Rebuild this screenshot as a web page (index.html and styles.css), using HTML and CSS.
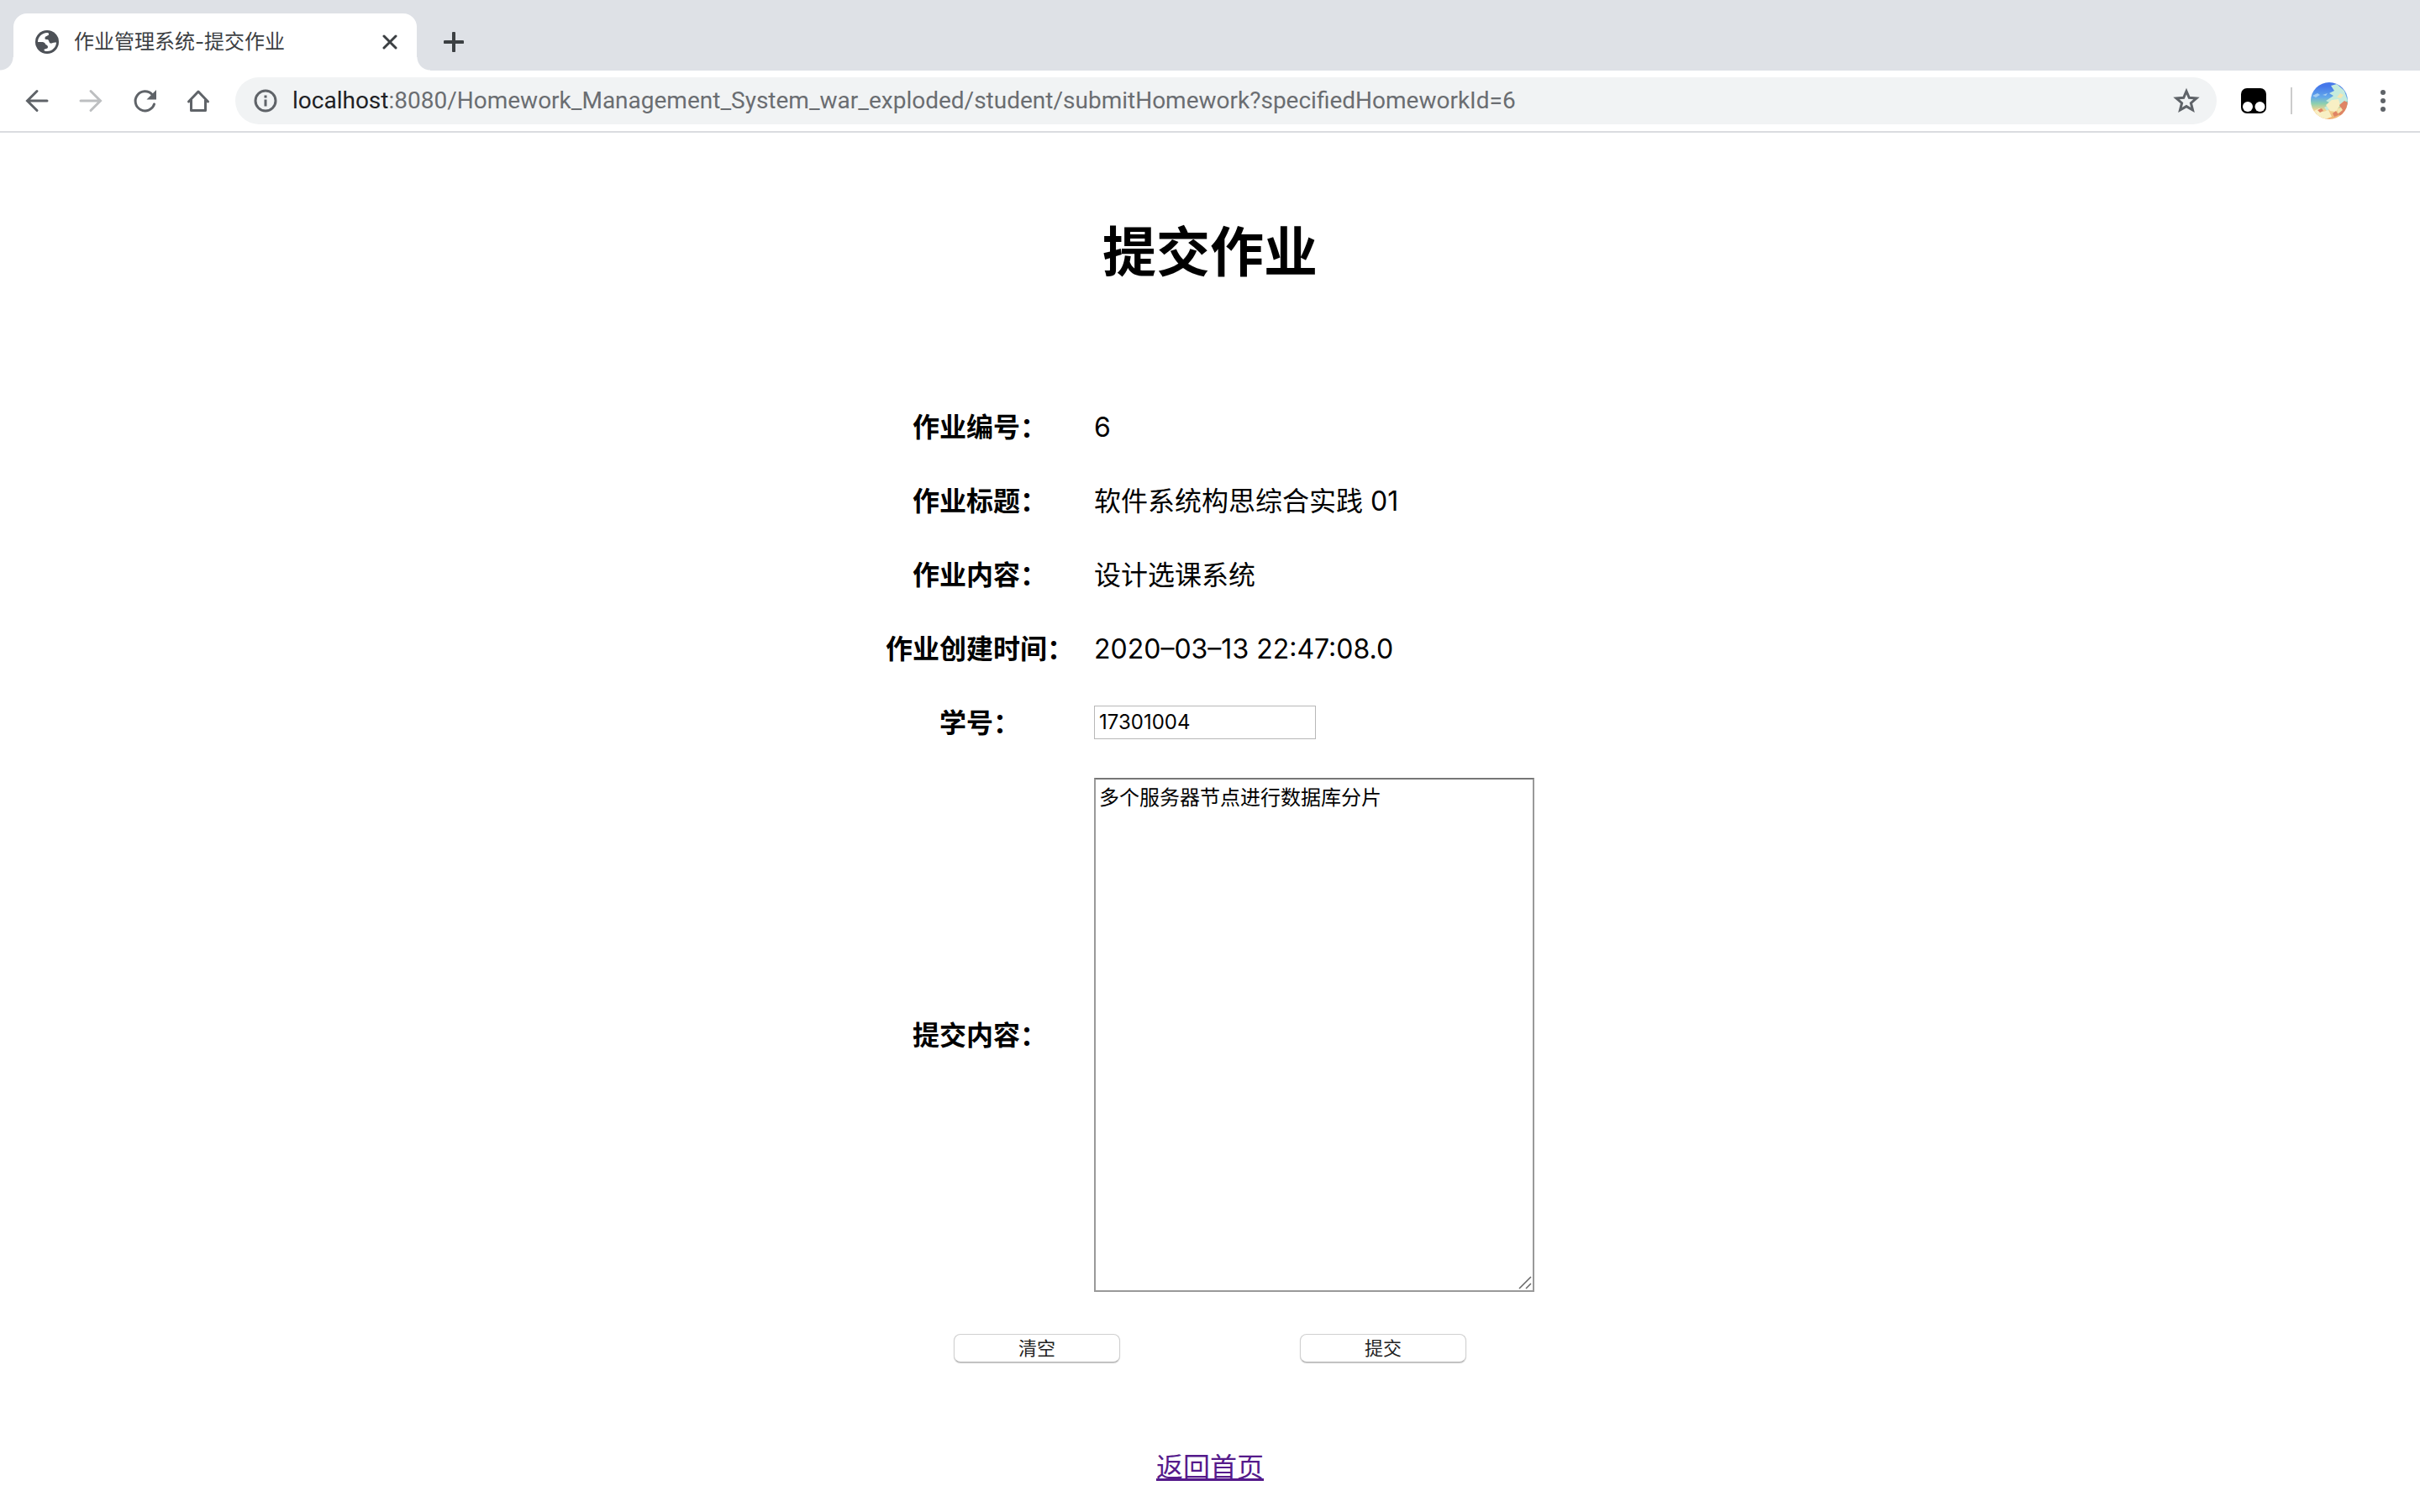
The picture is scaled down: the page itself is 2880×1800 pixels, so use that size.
FILE: index.html
```html
<!DOCTYPE html>
<html lang="zh-CN">
<head>
<meta charset="utf-8">
<title>作业管理系统-提交作业</title>
<link rel="stylesheet" href="styles.css">
</head>
<body>
<header class="browser">
  <div class="tab-strip">
    <div class="tab">
      <svg class="favicon" viewBox="0 0 28 28" aria-hidden="true"><circle cx="14" cy="14" r="14" fill="#4d5157"/><path d="M3 14C3 8 8 3 14 3C16.500 3 16.500 5 15.500 6C14 7 11.500 7 11.500 9.500C11 11 12.500 11 14.500 11C16.500 11 16 15 18 15.500C20 16 21 14 25 14.500C25 20 20 25 14 25C11.500 25 10 24.500 10.500 23C11 22 15 22.500 15 20C15 17 12 18 11.500 15.500C11 14 7 14 3 14Z" fill="#fff"/></svg>
      <span class="tab-title">作业管理系统-提交作业</span>
      <button class="icon-button tab-close" type="button" aria-label="关闭标签页"><svg viewBox="0 0 18 18"><path d="M2 2l14 14M16 2L2 16" fill="none" stroke="#3c4043" stroke-width="3" stroke-linecap="round"/></svg></button>
    </div>
    <button class="icon-button new-tab" type="button" aria-label="新标签页"><svg viewBox="0 0 24 24"><path d="M12 1.500v21M1.500 12h21" fill="none" stroke="#3c4043" stroke-width="4" stroke-linecap="round"/></svg></button>
  </div>
  <div class="toolbar">
    <nav class="nav-buttons">
      <button class="icon-button" type="button" aria-label="后退"><svg viewBox="0 0 32 32"><path d="M28 16H5M16 4.500L4.500 16L16 27.500" fill="none" stroke="#5f6368" stroke-width="3" stroke-linecap="round"/></svg></button>
      <button class="icon-button" type="button" aria-label="前进"><svg viewBox="0 0 32 32"><path d="M4 16h23M16 4.500L27.500 16L16 27.500" fill="none" stroke="#bdbfc1" stroke-width="3" stroke-linecap="round"/></svg></button>
      <button class="icon-button" type="button" aria-label="重新加载"><svg viewBox="0 0 32 32"><path d="M27.500 20A11.500 11.500 0 1 1 25 8.500" fill="none" stroke="#5f6368" stroke-width="3" stroke-linecap="round"/><path d="M30 3v11.500H18.500z" fill="#5f6368"/></svg></button>
      <button class="icon-button" type="button" aria-label="主页"><svg viewBox="0 0 32 32"><path d="M4.500 17L16 5L27.500 17M7.500 15V27.500H24.500V15" fill="none" stroke="#5f6368" stroke-width="3" stroke-linecap="round" stroke-linejoin="round"/></svg></button>
    </nav>
    <div class="omnibox">
      <svg class="info" viewBox="0 0 28 28" aria-hidden="true"><circle cx="14" cy="14" r="12" fill="none" stroke="#5f6368" stroke-width="3"/><path d="M12.500 12.500h3v8h-3zM12.500 7.500h3v3h-3z" fill="#5f6368"/></svg>
      <span class="url"><span class="host">localhost</span>:8080/Homework_Management_System_war_exploded/student/submitHomework?specifiedHomeworkId=6</span>
      <button class="icon-button" type="button" aria-label="添加书签"><svg viewBox="0 0 32 32"><path d="M16 4.500L19.300 12.300L28 13L21.400 18.700L23.500 27L16 22.600L8.500 27L10.600 18.700L4 13L12.700 12.300Z" fill="none" stroke="#5f6368" stroke-width="3"/></svg></button>
    </div>
    <div class="tools">
      <button class="icon-button" type="button" aria-label="扩展程序"><svg viewBox="0 0 32 32"><rect x="1" y="1" width="30" height="30" rx="7"/><circle cx="9" cy="23" r="6" fill="#fff"/><circle cx="23.500" cy="23" r="6" fill="#fff"/></svg></button>
      <span class="divider"></span>
      <button class="icon-button avatar" type="button" aria-label="用户"><svg viewBox="0 0 44 44">
        <defs><linearGradient id="sky" x2="0" y2="1"><stop offset="0.100" stop-color="#4577ea"/><stop offset="0.400" stop-color="#62a8ea"/><stop offset="0.580" stop-color="#8ed0ae"/><stop offset="0.750" stop-color="#f2d391"/><stop offset="1" stop-color="#f0b070"/></linearGradient></defs>
        <rect width="44" height="44" fill="url(#sky)"/>
        <path d="M24 4l7-2 9 8 4 12-8 4-9 3-8 5-3-4 8-5-6-3 9-6-5-3 6-3z" fill="#c5ebdc"/>
        <path d="M2 16l6-3 3 2-5 3zM14 15l6-2-2 3z" fill="#a5cdf0"/>
        <path d="M18 27l7-6 8-1 2 7-5 8-7-1zM4 34l6-3 5 4 6-2 4 8-8 3-8-4z" fill="#f8efc4"/>
        <path d="M34 27l6-5 4 2v10l-7 6-5-2 5-6zM8 33l5-2 2 3-4 2zM26 37l4-3 3 5-5 2z" fill="#df8565"/>
        <path d="M31 32l5-2 2 3-5 4zM35 13l4 2-3 4-5-1z" fill="#f5e6b0"/>
      </svg></button>
      <button class="icon-button" type="button" aria-label="菜单"><svg viewBox="0 0 32 32"><g fill="#5f6368"><circle cx="16" cy="6" r="3"/><circle cx="16" cy="16" r="3"/><circle cx="16" cy="26" r="3"/></g></svg></button>
    </div>
  </div>
</header>
<main class="page">
  <h1>提交作业</h1>
  <form class="homework-form">
    <table class="fields">
      <tr><th scope="row">作业编号：</th><td>6</td></tr>
      <tr><th scope="row">作业标题：</th><td>软件系统构思综合实践 01</td></tr>
      <tr><th scope="row">作业内容：</th><td>设计选课系统</td></tr>
      <tr><th scope="row">作业创建时间：</th><td>2020–03–13 22:47:08.0</td></tr>
      <tr><th scope="row"><label for="student-id">学号：</label></th><td class="control"><input class="student-id" id="student-id" type="text" value="17301004"></td></tr>
      <tr><th scope="row"><label for="content">提交内容：</label></th><td class="control">
        <div class="content-box">
          <textarea class="content" id="content">多个服务器节点进行数据库分片</textarea>
          <svg class="grip" viewBox="0 0 16 16" aria-hidden="true"><path d="M1 15L15 1M9 15L15 9" fill="none" stroke="#666" stroke-width="1.500"/></svg>
        </div>
      </td></tr>
    </table>
    <div class="actions">
      <button class="action" type="reset">清空</button>
      <button class="action" type="submit">提交</button>
    </div>
  </form>
  <a class="home-link" href="#">返回首页</a>
</main>
</body>
</html>
```
FILE: styles.css
```css
* {
  box-sizing: border-box;
}

body {
  margin: 0;
  background: #fff;
  color: #000;
  font-family: Inter, "Noto Sans CJK SC", sans-serif;
  font-size: 32px;
  line-height: 44px;
}

svg {
  display: block;
  width: 100%;
  height: 100%;
}

.icon-button {
  flex: none;
  width: 32px;
  height: 32px;
  padding: 0;
  border: 0;
  background: none;
}

/* Browser frame */

.browser {
  border-bottom: 2px solid #dadce0;
}

.tab-strip {
  display: flex;
  align-items: center;
  gap: 32px;
  height: 84px;
  padding: 16px 16px 0;
  background: #dee1e6;
}

.tab {
  position: relative;
  display: flex;
  align-items: center;
  width: 480px;
  height: 68px;
  padding: 0 23px 0 26px;
  border-radius: 16px 16px 0 0;
  background: #fff;
}

.tab::before,
.tab::after {
  content: "";
  position: absolute;
  bottom: 0;
  width: 16px;
  height: 16px;
}

.tab::before {
  right: 100%;
  background: radial-gradient(circle at 0 0, #dee1e6 15px, #fff 16px);
}

.tab::after {
  left: 100%;
  background: radial-gradient(circle at 100% 0, #dee1e6 15px, #fff 16px);
}

.favicon {
  flex: none;
  width: 28px;
  height: 28px;
}

.tab-title {
  flex: 1;
  margin-left: 18px;
  color: #3c4043;
  font-size: 24px;
}

.tab-close {
  width: 18px;
  height: 18px;
}

.new-tab {
  width: 24px;
  height: 24px;
}

.toolbar {
  display: flex;
  align-items: center;
  height: 72px;
  padding: 0 28px;
}

.nav-buttons {
  display: flex;
  gap: 32px;
  margin-right: 28px;
}

.omnibox {
  display: flex;
  flex: 1;
  align-items: center;
  height: 56px;
  padding: 0 20px 0 22px;
  border-radius: 28px;
  background: #f1f3f4;
}

.info {
  flex: none;
  width: 28px;
  height: 28px;
}

.url {
  flex: 1;
  margin-left: 18px;
  color: #6a6d71;
  font-family: Roboto, sans-serif;
  font-size: 28px;
}

.host {
  color: #202124;
}

.tools {
  display: flex;
  align-items: center;
  margin-left: 28px;
}

.divider {
  width: 2px;
  height: 32px;
  margin: 0 22px 0 28px;
  background: #ccc;
}

.avatar {
  width: 44px;
  height: 44px;
  margin-right: 26px;
  border-radius: 50%;
  overflow: hidden;
}

/* Homework page */

.page {
  display: flex;
  flex-direction: column;
  align-items: center;
  padding: 98px 16px 30px;
}

h1 {
  margin: 0 0 120px;
  font-size: 64px;
  line-height: 88px;
}

.fields {
  border-spacing: 0;
}

.fields th,
.fields td {
  padding: 23px 12px 21px;
}

.fields .control {
  padding: 22px 12px;
}

.student-id {
  display: block;
  width: 264px;
  height: 40px;
  padding: 0 5px;
  border: 1px solid #b8b8b8;
  font: inherit;
  font-size: 24px;
}

.content-box {
  position: relative;
}

.content {
  display: block;
  width: 524px;
  height: 612px;
  padding: 4px;
  border: 2px solid #999;
  border-top-color: #767676;
  font: inherit;
  font-size: 24px;
  line-height: 36px;
  resize: none;
}

.grip {
  position: absolute;
  right: 3px;
  bottom: 3px;
  width: 16px;
  height: 16px;
}

.actions {
  display: flex;
  justify-content: center;
  gap: 214px;
  margin: 28px 0 103px;
}

.action {
  width: 198px;
  height: 34px;
  padding: 0;
  border: 1px solid #d0d0d0;
  border-bottom-color: #b4b4b4;
  border-radius: 8px;
  background: #fff;
  box-shadow: 0 1px 1px #ccc;
  color: #222;
  font: inherit;
  font-size: 22px;
  line-height: 32px;
}

.home-link {
  color: #551a8b;
}
```
